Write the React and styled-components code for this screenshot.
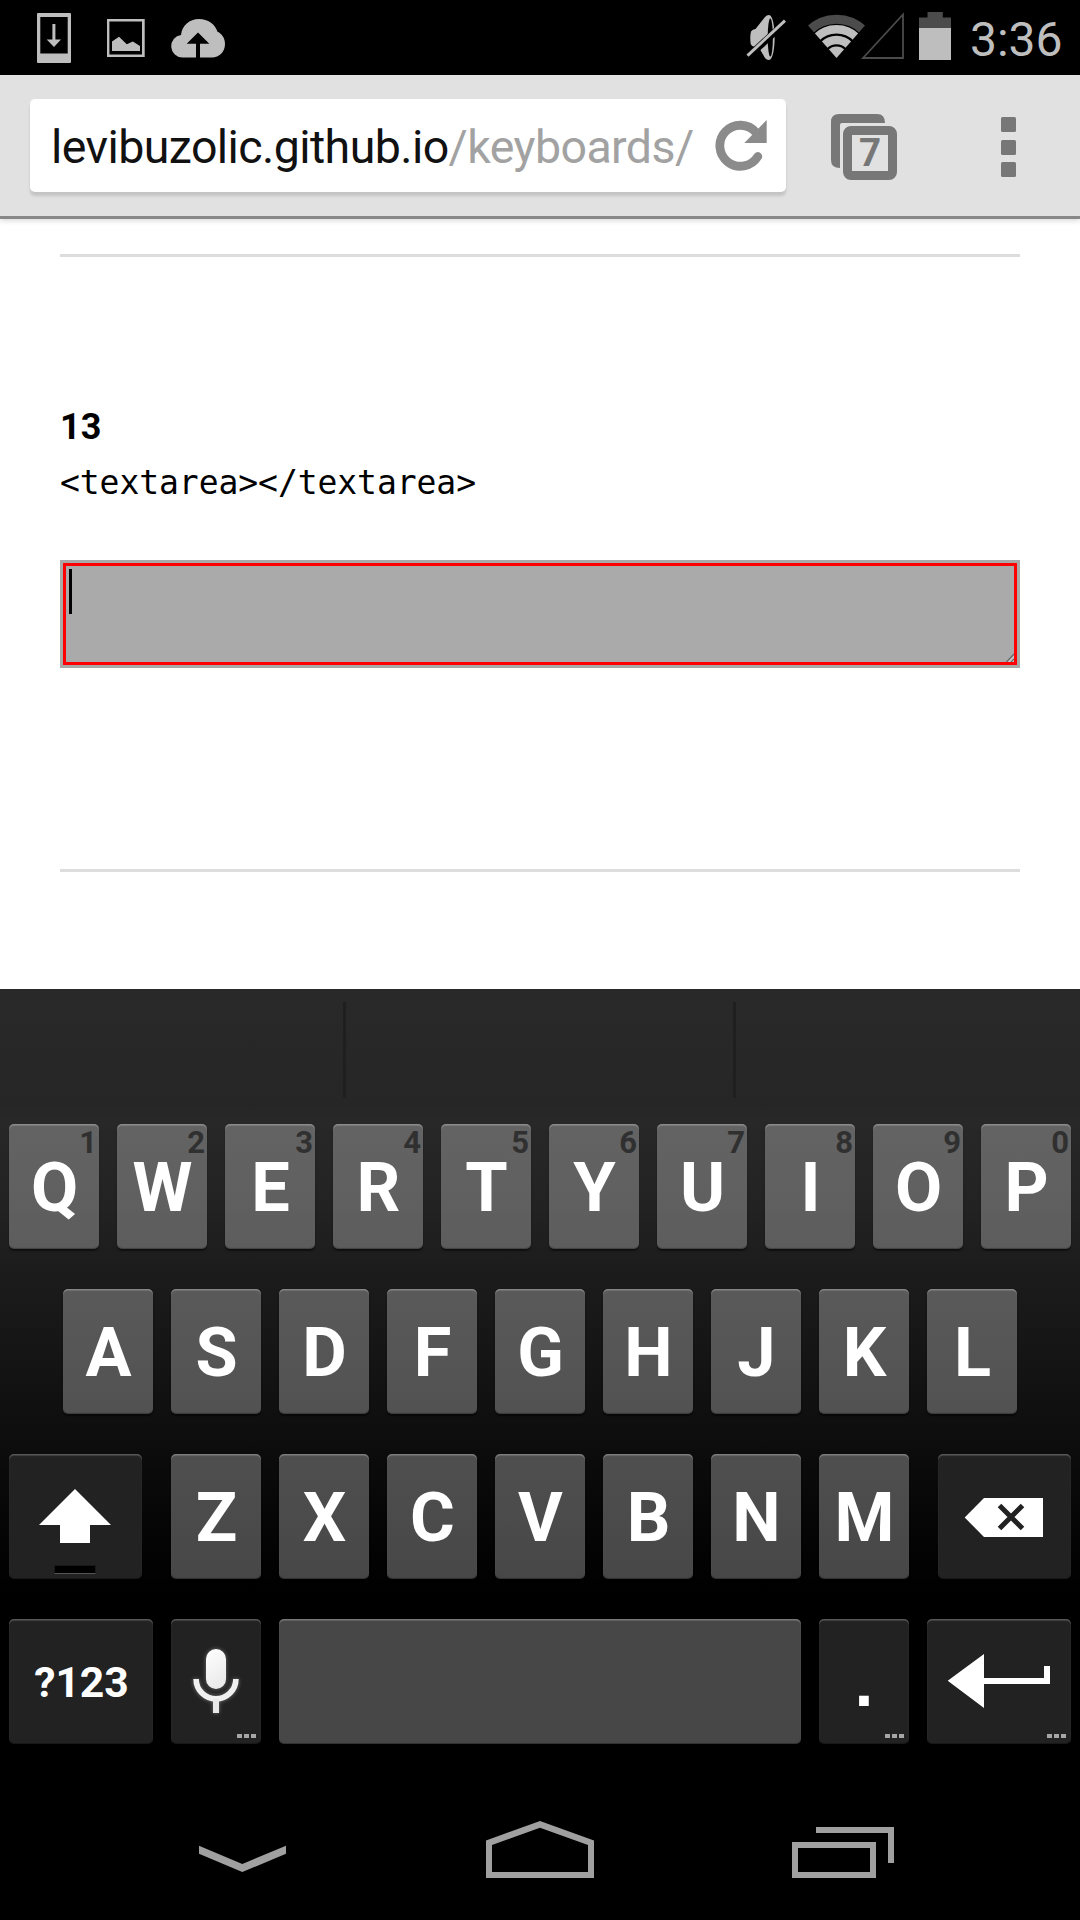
import React from "react";
import styled, { createGlobalStyle, css } from "styled-components";

const GlobalStyle = createGlobalStyle`
  * { box-sizing: border-box; }
  body { margin: 0; background: #000; font-family: Roboto, "Liberation Sans", sans-serif; }
  svg { display: block; flex: none; }
`;

const Screen = styled.div`
  width: 1080px;
  height: 1920px;
  display: flex;
  flex-direction: column;
  overflow: hidden;
  background: #fff;
`;

/* ---------- status bar ---------- */

const StatusBar = styled.header`
  height: 75px;
  flex: none;
  display: flex;
  justify-content: space-between;
  padding: 0 15px 0 36px;
  background: #000;
`;

const StatusGroup = styled.div`
  display: flex;
`;

const StatusSlot = styled.div`
  margin: 0 ${(p) => p.$after || 0}px 0 ${(p) => p.$before || 0}px;
`;

const Clock = styled.time`
  width: 95px;
  margin-left: 19px;
  font-size: 48px;
  line-height: 79px;
  color: #bebebe;
  white-space: nowrap;
`;

/* ---------- browser toolbar ---------- */

const Toolbar = styled.div`
  height: 144px;
  flex: none;
  display: flex;
  align-items: flex-start;
  padding: 24px 64.5px 0 30px;
  background: #e1e1e1;
  border-bottom: 3px solid #888;
  box-shadow: 0 2px 5px rgba(0, 0, 0, 0.14);
`;

const Omnibox = styled.div`
  width: 756px;
  height: 93px;
  display: flex;
  align-items: center;
  justify-content: space-between;
  padding: 0 17px 0 21px;
  border-radius: 5px;
  background: #fff;
  box-shadow: 0 4px 3px rgba(0, 0, 0, 0.13);
`;

const Url = styled.div`
  font-size: 46.5px;
  line-height: 93px;
  padding-top: 4px;
  color: #111;
  white-space: nowrap;
  letter-spacing: -0.58px;
`;

const UrlPath = styled.span`
  color: #a2a2a2;
`;

const TabSwitcher = styled.button`
  position: relative;
  width: 66px;
  height: 66px;
  margin: 15px 0 0 45px;
  padding: 0;
  border: 0;
  background: none;
`;

const TabCount = styled.span`
  position: absolute;
  left: 12px;
  top: 12px;
  width: 54px;
  height: 54px;
  font: bold 38.5px/54px Roboto, "Liberation Sans", sans-serif;
  text-align: center;
  color: #777;
`;

const Overflow = styled.div`
  display: grid;
  gap: 7.5px;
  margin: 18px 0 0 auto;
`;

const OverflowDot = styled.i`
  width: 15px;
  height: 15px;
  border-radius: 1.5px;
  background: #777;
`;

/* ---------- page ---------- */

const Page = styled.main`
  height: 770px;
  flex: none;
  padding: 35px 60px 0;
  color: #000;
`;

const Rule = styled.hr`
  height: 3px;
  margin: 0;
  border: 0;
  background: #ddd;
`;

const Example = styled.section`
  height: 612px;
  padding-top: 143px;
`;

const ExampleNumber = styled.h2`
  margin: 0;
  font-size: 36px;
  line-height: 55px;
  font-weight: 700;
`;

const ExampleCode = styled.code`
  display: block;
  margin-bottom: 49px;
  font: 33px/56px "DejaVu Sans Mono", monospace;
  letter-spacing: -0.06px;
  white-space: nowrap;
`;

const TextArea = styled.div`
  height: 108px;
  display: flex;
  justify-content: space-between;
  padding: 6px;
  border: 3px solid #a9a9a9;
  background: #aaa;
  outline: 3px solid #f00;
  outline-offset: -6px;
`;

const Caret = styled.i`
  width: 3px;
  height: 45px;
  background: #000;
`;

const GripSlot = styled.div`
  align-self: flex-end;
  margin: 0 -3px -3px 0;
`;

/* ---------- keyboard ---------- */

const Keyboard = styled.section`
  height: 787px;
  flex: none;
  background: linear-gradient(#292929 0, #262626 118px, #282828 130px, #232323 210px, #1c1c1c 281px, #101010 420px, #070707 520px, #000 600px);
`;

const Suggestions = styled.div`
  display: flex;
  height: 135px;
  padding-top: 13px;
`;

const Suggestion = styled.div`
  width: ${(p) => p.$width}px;
  height: 96px;
  border-right: ${(p) => (p.$last ? "0" : "3px solid #1f1f1f")};
`;

const KeyRow = styled.div`
  display: flex;
  gap: 18px;
  height: 125px;
  padding: 0 ${(p) => p.$inset}px;
  margin-bottom: 40px;
`;

const LetterGroup = styled.div`
  display: flex;
  gap: 18px;
  margin: 0 11px 0 11.5px;
`;

const Key = styled.div`
  position: relative;
  flex: none;
  width: ${(p) => p.$width || 90}px;
  height: 125px;
  border-radius: 5px;
  text-align: center;
  color: #fff;
  ${(p) =>
    p.$dark
      ? css`
          background: #222;
          box-shadow: inset 0 1.5px 1px rgba(255, 255, 255, 0.26), inset 0 -1px 1px rgba(0, 0, 0, 0.3);
        `
      : css`
          background: rgba(255, 255, 255, 0.28);
          box-shadow: inset 0 1.5px 1px rgba(255, 255, 255, 0.28), inset 0 -1px 1px rgba(0, 0, 0, 0.3),
            0 2px 1.5px rgba(0, 0, 0, 0.5);
        `}
`;

const KeyLabel = styled.span`
  display: block;
  padding-left: 1px;
  font-size: 68.5px;
  line-height: 127px;
  font-weight: 700;
`;

const ModeLabel = styled(KeyLabel)`
  font-size: 42.7px;
`;

const PeriodLabel = styled(KeyLabel)`
  padding: 0;
  font-family: "Liberation Sans", Arial, sans-serif;
  font-size: 68px;
`;

const KeyHint = styled.span`
  position: absolute;
  right: 2px;
  top: 0;
  font-size: 31px;
  line-height: 37px;
  font-weight: 700;
  color: #303030;
`;

const KeyIcon = styled.div`
  display: flex;
  padding: ${(p) => p.$top}px 0 0 ${(p) => p.$left}px;
`;

const MicGlow = styled(KeyIcon)`
  filter: drop-shadow(0 0 2px rgba(255, 255, 255, 0.35));
`;

const MoreDots = styled.div`
  position: absolute;
  right: 5px;
  bottom: 6px;
  display: flex;
  gap: 2px;
`;

const MoreDot = styled.i`
  width: 5px;
  height: 4px;
  background: #a6a6a6;
`;

const ShiftLight = styled.i`
  position: absolute;
  left: 45px;
  bottom: 5px;
  width: 42px;
  height: 9px;
  background: #000;
  border: 1px solid #191919;
  border-bottom-color: #555;
`;

/* ---------- navigation bar ---------- */

const NavBar = styled.nav`
  height: 144px;
  flex: none;
  display: flex;
  align-items: flex-start;
  gap: 198px;
  padding: 45px 0 0 198px;
  background: #000;
`;

/* Drawings share the coordinate system of the screen. */
const Art = ({ box, children }) => (
  <svg viewBox={box.join(" ")} width={box[2]} height={box[3]}>
    {children}
  </svg>
);

const LIGHT = "#bebebe";
const DIM = "#4b4b4b";

const DownloadIcon = () => (
  <Art box={[36, 0, 36, 75]}>
    <path fill={LIGHT} fillRule="evenodd" d="M38 13h32q1 0 1 1v48q0 1-1 1H38q-1 0-1-1V14q0-1 1-1zM40.3 17v36.4h27.4V17z" />
    <path fill={LIGHT} d="M52.4 24h3v15.4H61L54 47l-7.3-7.6h5.7z" />
  </Art>
);

const PictureIcon = () => (
  <Art box={[106, 0, 40, 75]}>
    <path fill={LIGHT} fillRule="evenodd" d="M107 19h37.7v38H107zM109.4 21.6v32.8h32.6V21.6z" />
    <path fill={LIGHT} d="M112 41.5l7-4.700 7.800 7.400 6-2.800 7.200 4.600v5H112z" />
  </Art>
);

const CloudIcon = () => (
  <Art box={[170, 0, 56, 75]}>
    <path
      fill={LIGHT}
      fillRule="evenodd"
      d="M182.500 57.500A11.300 11.300 0 0 1 181 35C182 25.500 189.500 19 199 19c9 0 16 5 18.500 12.800 4.500 2 7.500 6.500 7.500 12.200 0 7.800-5.800 13.500-13 13.500h-12V43.800h9.300L198 32.500l-11.300 11.300h9.300v13.700z"
    />
  </Art>
);

const MutedIcon = () => (
  <Art box={[745, 0, 43, 75]}>
    <path fill={LIGHT} d="M751 31.500Q752.500 29 755.500 29L765 17Q766.500 15 769 15C776.500 15 776.500 60 769 60Q766.500 60 765 58L758 46Q752 48 750.700 44Q749.700 37 751 31.500z" />
    <ellipse cx="770.300" cy="37.500" rx="2.600" ry="19" fill="#000" />
    <path d="M748.500 56.500L784 23.500" stroke="#000" strokeWidth="7" />
    <path d="M747.500 55.600L785 20.600" stroke={LIGHT} strokeWidth="3" />
  </Art>
);

const WifiIcon = () => (
  <Art box={[806, 0, 61, 75]}>
    <defs>
      <clipPath id="wifi-wedge">
        <path d="M836.500 58L797 13V0h79v13z" />
      </clipPath>
    </defs>
    <g clipPath="url(#wifi-wedge)" fill="none" stroke={LIGHT}>
      <circle cx="836.500" cy="58" r="38.800" stroke={DIM} strokeWidth="9" />
      <circle cx="836.500" cy="58" r="28.700" strokeWidth="8.600" />
      <circle cx="836.500" cy="58" r="18" strokeWidth="8.600" />
      <circle cx="836.500" cy="58" r="11.500" fill={LIGHT} stroke="none" />
    </g>
  </Art>
);

const SignalIcon = () => (
  <Art box={[860, 0, 45, 75]}>
    <path d="M863 58L903 14.500V58z" fill="none" stroke={DIM} strokeWidth="1.800" />
  </Art>
);

const BatteryIcon = () => (
  <Art box={[919, 0, 32, 75]}>
    <path fill={DIM} d="M919 17.500h8.500V12h15.300v5.500H951V29h-32z" />
    <path fill={LIGHT} d="M919 28h32v32h-32z" />
  </Art>
);

const ReloadIcon = () => (
  <Art box={[715, 120, 54, 53]}>
    <path d="M757.800 157.500A20.500 20.500 0 1 1 756 133.500" fill="none" stroke="#8b8b8b" strokeWidth="8.800" strokeLinecap="round" />
    <path d="M766.700 121v23H744.300z" fill="#8b8b8b" />
  </Art>
);

const TabsIcon = () => (
  <Art box={[831, 114, 66, 66]}>
    <path fill="#777" d="M839 114h38q8 0 8 9H842q-2 0-2 2v43q-9 0-9-8v-38q0-8 8-8z" />
    <rect x="847.500" y="130.500" width="45" height="45" rx="3.500" fill="none" stroke="#777" strokeWidth="9" />
  </Art>
);

const GripIcon = () => (
  <Art box={[1006, 653, 8, 9]}>
    <path d="M1014 655v7h-7z" fill="#c4c4c4" />
    <path d="M1006.500 662l7.500-8M1011 662l3-3" stroke="#666" strokeWidth="1.200" />
  </Art>
);

const ShiftIcon = () => (
  <Art box={[39, 1489, 72, 54]}>
    <path fill="#fff" d="M75 1489l36 36H90v18H60v-18H39z" />
  </Art>
);

const BackspaceIcon = () => (
  <Art box={[964, 1498, 80, 39]}>
    <path fill="#fff" d="M964.700 1517.500L984 1498h59v39h-59z" />
    <path d="M999.500 1505.500l23 23M1022.500 1505.500l-23 23" stroke="#222" strokeWidth="5" />
  </Art>
);

const MicIcon = () => (
  <Art box={[186, 1642, 60, 78]}>
    <defs>
      <linearGradient id="mic-shade" x1="0" y1="0" x2="0.3" y2="1">
        <stop offset="0" stopColor="#fff" />
        <stop offset="1" stopColor="#ebebeb" />
      </linearGradient>
    </defs>
    <rect x="206" y="1649" width="20" height="40" rx="10" fill="url(#mic-shade)" />
    <path d="M196.100 1679a19.900 19.900 0 0 0 39.800 0" fill="none" stroke="#f0f0f0" strokeWidth="5.600" />
    <path d="M213 1699h6v14h-6z" fill="#e8e8e8" />
  </Art>
);

const EnterIcon = () => (
  <Art box={[947, 1654, 103, 54]}>
    <path fill="#fff" d="M947.700 1680.700L984 1654v24h60v-12h6v18h-66v24z" />
  </Art>
);

const HideIcon = () => (
  <Art box={[198, 1821, 90, 57]}>
    <path fill="#a0a0a0" d="M199 1845.700l43.300 18.300 43.700-18.300v8l-43.700 18.400-43.300-18.400z" />
  </Art>
);

const HomeIcon = () => (
  <Art box={[486, 1821, 108, 57]}>
    <path fill="#a0a0a0" fillRule="evenodd" d="M486 1840.500l54-19.500 54 19.500v37.500H486zM492 1845v27h96v-27l-48-17.300z" />
  </Art>
);

const RecentsIcon = () => (
  <Art box={[792, 1821, 102, 57]}>
    <path fill="#a0a0a0" fillRule="evenodd" d="M792 1842h84v36h-84zM798 1848v24h72v-24zM816 1827h78v36h-6v-30h-72z" />
  </Art>
);

const More = () => (
  <MoreDots>
    <MoreDot />
    <MoreDot />
    <MoreDot />
  </MoreDots>
);

const LetterKey = ({ letter, hint }) => (
  <Key>
    {hint && <KeyHint>{hint}</KeyHint>}
    <KeyLabel>{letter}</KeyLabel>
  </Key>
);

const TOP = [..."QWERTYUIOP"];
const HOME = [..."ASDFGHJKL"];
const BOTTOM = [..."ZXCVBNM"];

export default function App() {
  return (
    <Screen>
      <GlobalStyle />
      <StatusBar>
        <StatusGroup>
          <DownloadIcon />
          <StatusSlot $before={34} $after={24}>
            <PictureIcon />
          </StatusSlot>
          <CloudIcon />
        </StatusGroup>
        <StatusGroup>
          <MutedIcon />
          <StatusSlot $before={18} $after={-7}>
            <WifiIcon />
          </StatusSlot>
          <StatusSlot $after={14}>
            <SignalIcon />
          </StatusSlot>
          <BatteryIcon />
          <Clock>3:36</Clock>
        </StatusGroup>
      </StatusBar>

      <Toolbar>
        <Omnibox>
          <Url>
            levibuzolic.github.io<UrlPath>/keyboards/</UrlPath>
          </Url>
          <ReloadIcon />
        </Omnibox>
        <TabSwitcher aria-label="Tabs">
          <TabsIcon />
          <TabCount>7</TabCount>
        </TabSwitcher>
        <Overflow>
          <OverflowDot />
          <OverflowDot />
          <OverflowDot />
        </Overflow>
      </Toolbar>

      <Page>
        <Rule />
        <Example>
          <ExampleNumber>13</ExampleNumber>
          <ExampleCode>{"<textarea></textarea>"}</ExampleCode>
          <TextArea>
            <Caret />
            <GripSlot>
              <GripIcon />
            </GripSlot>
          </TextArea>
        </Example>
        <Rule />
      </Page>

      <Keyboard>
        <Suggestions>
          <Suggestion $width={346} />
          <Suggestion $width={390} />
          <Suggestion $width={344} $last />
        </Suggestions>
        <KeyRow $inset={9}>
          {TOP.map((l, i) => (
            <LetterKey key={l} letter={l} hint={String((i + 1) % 10)} />
          ))}
        </KeyRow>
        <KeyRow $inset={63}>
          {HOME.map((l) => (
            <LetterKey key={l} letter={l} />
          ))}
        </KeyRow>
        <KeyRow $inset={9}>
          <Key $dark $width={132.5}>
            <KeyIcon $top={35} $left={30}>
              <ShiftIcon />
            </KeyIcon>
            <ShiftLight />
          </Key>
          <LetterGroup>
            {BOTTOM.map((l) => (
              <LetterKey key={l} letter={l} />
            ))}
          </LetterGroup>
          <Key $dark $width={133}>
            <KeyIcon $top={44} $left={26}>
              <BackspaceIcon />
            </KeyIcon>
          </Key>
        </KeyRow>
        <KeyRow $inset={9}>
          <Key $dark $width={144}>
            <ModeLabel>?123</ModeLabel>
          </Key>
          <Key $dark>
            <MicGlow $top={23} $left={15}>
              <MicIcon />
            </MicGlow>
            <More />
          </Key>
          <Key $width={522} />
          <Key $dark>
            <PeriodLabel>.</PeriodLabel>
            <More />
          </Key>
          <Key $dark $width={144}>
            <KeyIcon $top={35} $left={20}>
              <EnterIcon />
            </KeyIcon>
            <More />
          </Key>
        </KeyRow>
      </Keyboard>

      <NavBar>
        <HideIcon />
        <HomeIcon />
        <RecentsIcon />
      </NavBar>
    </Screen>
  );
}
